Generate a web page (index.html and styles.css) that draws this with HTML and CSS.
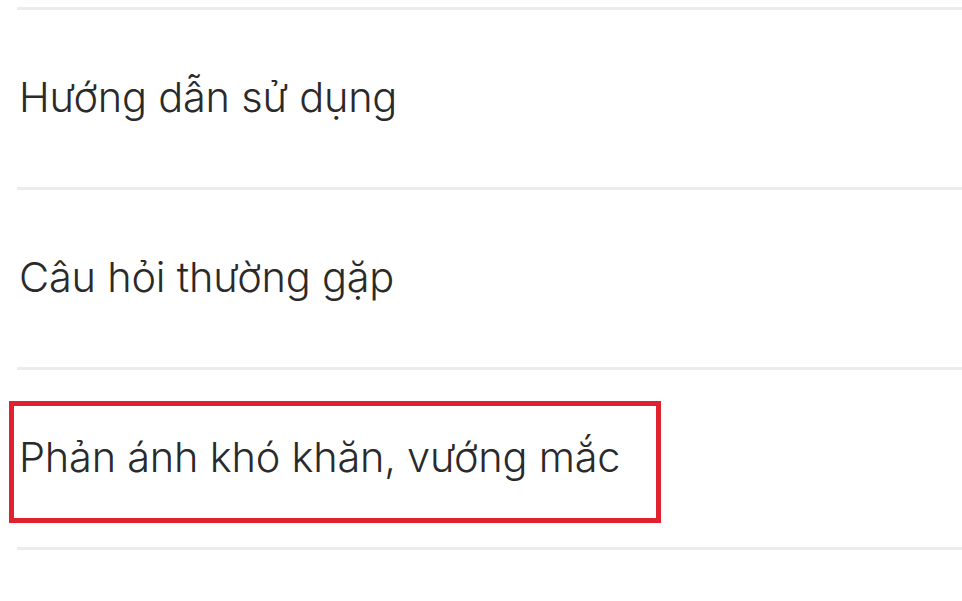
FILE: index.html
```html
<!DOCTYPE html>
<html lang="vi">
<head>
<meta charset="utf-8">
<title>Menu</title>
<link rel="stylesheet" href="styles.css">
</head>
<body>
  <ul class="menu">
    <li class="menu-item"><span class="label">Hướng dẫn sử dụng</span></li>
    <li class="menu-item"><span class="label">Câu hỏi thường gặp</span></li>
    <li class="menu-item highlighted"><span class="label">Phản ánh khó khăn, vướng mắc</span></li>
    <li class="menu-item last"></li>
  </ul>
</body>
</html>
```
FILE: styles.css
```css
html, body {
  margin: 0;
  padding: 0;
  background: #ffffff;
  overflow: hidden;
}

body {
  font-family: "Inter", "Liberation Sans", sans-serif;
  color: #2b2a2a;
}

.menu {
  list-style: none;
  margin: 0;
  padding: 7px 0 0 17px;
}

.menu-item {
  position: relative;
  height: 177px;
  border-top: 3px solid #ececec;
  padding-left: 2px;
  display: flex;
  align-items: flex-start;
}

.menu-item.last {
  height: 40px;
}

.label {
  display: block;
  margin-top: 61px;
  font-size: 41.5px;
  font-weight: 350;
  line-height: 52px;
  letter-spacing: -0.22px;
  white-space: nowrap;
}

.highlighted::after {
  content: "";
  position: absolute;
  left: -8px;
  top: 31px;
  width: 642px;
  height: 112px;
  border: 5px solid #e0222f;
  pointer-events: none;
}
```
